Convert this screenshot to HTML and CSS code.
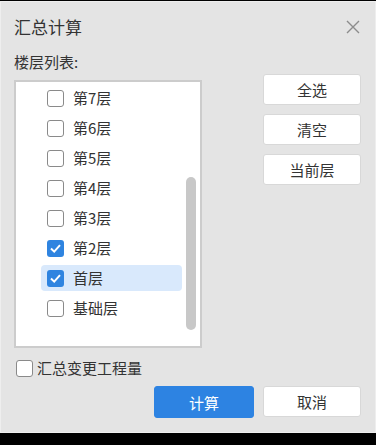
FILE: index.html
```html
<!DOCTYPE html>
<html lang="zh-CN">
<head>
    <meta charset="UTF-8">
    <title>汇总计算</title>
    <link rel="stylesheet" href="styles.css">
</head>
<body>
    <div class="dialog">
        <div class="header">
            <span class="title">汇总计算</span>
            <svg class="close" width="14" height="14" viewBox="0 0 14 14">
                <path d="M1 1 L13 13 M13 1 L1 13" stroke="#8c8c8c" stroke-width="1.4" fill="none"/>
            </svg>
        </div>

        <div class="main">
            <div class="left">
                <div class="label">楼层列表:</div>
                <div class="listbox">
                    <div class="list">
                        <div class="row"><span class="check"></span>第7层</div>
                        <div class="row"><span class="check"></span>第6层</div>
                        <div class="row"><span class="check"></span>第5层</div>
                        <div class="row"><span class="check"></span>第4层</div>
                        <div class="row"><span class="check"></span>第3层</div>
                        <div class="row"><span class="check checked"><svg width="17" height="17" viewBox="0 0 17 17"><path d="M4 8.5 L7.2 11.6 L13 5.2" stroke="#fff" stroke-width="2" fill="none"/></svg></span>第2层</div>
                        <div class="row selected"><span class="check checked"><svg width="17" height="17" viewBox="0 0 17 17"><path d="M4 8.5 L7.2 11.6 L13 5.2" stroke="#fff" stroke-width="2" fill="none"/></svg></span>首层</div>
                        <div class="row"><span class="check"></span>基础层</div>
                    </div>
                    <div class="scrollbar">
                        <div class="thumb"></div>
                    </div>
                </div>
            </div>
            <div class="side">
                <button class="btn">全选</button>
                <button class="btn">清空</button>
                <button class="btn">当前层</button>
            </div>
        </div>

        <div class="option">
            <span class="check"></span>汇总变更工程量
        </div>

        <div class="footer">
            <button class="btn primary">计算</button>
            <button class="btn">取消</button>
        </div>
    </div>
</body>
</html>
```

FILE: styles.css
```css
* {
    margin: 0;
    padding: 0;
    box-sizing: border-box;
}

body {
    background: #000;
    font-family: "Noto Sans CJK SC", "Noto Sans", sans-serif;
    color: #333;
    font-size: 15px;
}

.dialog {
    margin-top: 1px;
    width: 376px;
    height: 432px;
    background: #e4e4e4;
    border: 1px solid #eeeeee;
    padding: 13px 14px 0 13px;
}

.header {
    display: flex;
    justify-content: space-between;
    align-items: center;
    height: 24px;
}

.title {
    font-size: 17px;
    line-height: 24px;
}

.close {
    margin-right: 1px;
}

.main {
    display: flex;
    justify-content: space-between;
    margin-top: 12px;
}

.left {
    width: 188px;
}

.label {
    line-height: 22px;
    margin-bottom: 7px;
}

.listbox {
    height: 268px;
    background: #fff;
    border: 2px solid #cccccc;
    display: flex;
}

.list {
    flex: 1;
    padding: 3px 0 0 25px;
    display: flex;
    flex-direction: column;
    gap: 4px;
}

.row {
    display: flex;
    align-items: center;
    height: 26px;
    width: 141px;
    padding-left: 6px;
    border-radius: 4px;
    line-height: 26px;
}

.row.selected {
    background: #d9e9fc;
}

.check {
    width: 17px;
    height: 17px;
    border: 1.5px solid #8a8a8a;
    border-radius: 3px;
    background: #fff;
    margin-right: 9px;
    flex-shrink: 0;
    display: flex;
}

.check.checked {
    background: #2f84e0;
    border: none;
}

.scrollbar {
    width: 10px;
    margin-right: 4px;
}

.thumb {
    margin-top: 95px;
    height: 153px;
    background: #c8c8c8;
    border-radius: 5px;
}

.side {
    display: flex;
    flex-direction: column;
    gap: 9px;
    padding-top: 23px;
}

.btn {
    width: 98px;
    height: 31px;
    background: #fff;
    border: 1px solid #d8d8d8;
    border-radius: 3px;
    font-family: inherit;
    font-size: 15px;
    color: #333;
}

.option {
    display: flex;
    align-items: center;
    margin-top: 9px;
    margin-left: 2px;
    line-height: 22px;
}

.option .check {
    margin-right: 4px;
}

.footer {
    display: flex;
    justify-content: flex-end;
    gap: 9px;
    margin-top: 7px;
}

.btn.primary {
    width: 100px;
    height: 32px;
    background: #2d83e2;
    border-color: #2d83e2;
    color: #fff;
}
```
